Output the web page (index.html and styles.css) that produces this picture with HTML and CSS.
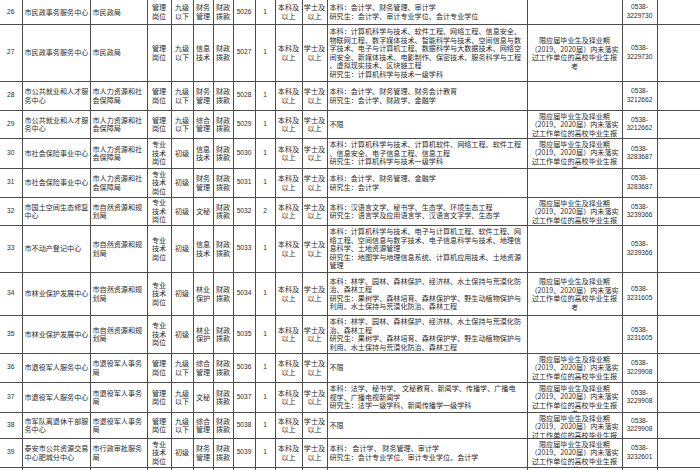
FILE: index.html
```html
<!DOCTYPE html>
<html lang="zh-CN">
<head>
<meta charset="utf-8">
<title>岗位表</title>
<link rel="stylesheet" href="styles.css">
</head>
<body>
<table class="grid">
<colgroup>
<col class="w-no"><col class="w-unit"><col class="w-dept"><col class="w-type"><col class="w-lvl"><col class="w-cat"><col class="w-fund"><col class="w-code"><col class="w-num"><col class="w-edu"><col class="w-deg"><col class="w-major"><col class="w-note"><col class="w-tel"><col class="w-rem">
</colgroup>
<tbody>
<tr class="h24">
<td class="c n">26</td><td>市民政事务服务中心</td><td>市民政局</td><td class="c">管理<br>岗位</td><td class="c">九级<br>以下</td><td class="c">财务<br>管理</td><td class="c">财政<br>拨款</td><td class="c n">5026</td><td class="c n">1</td><td class="c">本科及<br>以上</td><td class="c">学士及<br>以上</td>
<td>本科：会计学、财务管理、审计学<br>研究生：会计学、审计专业学位、会计专业学位</td><td class="c"></td><td class="c n">0538-<br>3229730</td><td></td>
</tr>
<tr class="h57">
<td class="c n">27</td><td>市民政事务服务中心</td><td>市民政局</td><td class="c">管理<br>岗位</td><td class="c">九级<br>以下</td><td class="c">信息<br>技术</td><td class="c">财政<br>拨款</td><td class="c n">5027</td><td class="c n">1</td><td class="c">本科及<br>以上</td><td class="c">学士及<br>以上</td>
<td>本科：计算机科学与技术、软件工程、网络工程、信息安全、<br>物联网工程、数字媒体技术、智能科学与技术、空间信息与数<br>字技术、电子与计算机工程、数据科学与大数据技术、网络空<br>间安全、新媒体技术、电影制作、保密技术、服务科学与工程<br>、虚拟现实技术、区块链工程<br>研究生：计算机科学与技术一级学科</td>
<td class="c"><div class="clip">限应届毕业生及择业期<br>（2019、2020届）内未落实<br>过工作单位的高校毕业生报<br>考</div></td><td class="c n">0538-<br>3229730</td><td></td>
</tr>
<tr class="h29">
<td class="c n">28</td><td>市公共就业和人才服<br>务中心</td><td>市人力资源和社<br>会保障局</td><td class="c">管理<br>岗位</td><td class="c">九级<br>以下</td><td class="c">财务<br>管理</td><td class="c">财政<br>拨款</td><td class="c n">5028</td><td class="c n">1</td><td class="c">本科及<br>以上</td><td class="c">学士及<br>以上</td>
<td>本科：会计学、财务管理、财务会计教育<br>研究生：会计学、财政学、金融学</td><td class="c"></td><td class="c n">0538-<br>3212662</td><td></td>
</tr>
<tr class="h28">
<td class="c n">29</td><td>市公共就业和人才服<br>务中心</td><td>市人力资源和社<br>会保障局</td><td class="c">管理<br>岗位</td><td class="c">九级<br>以下</td><td class="c">综合<br>管理</td><td class="c">财政<br>拨款</td><td class="c n">5029</td><td class="c n">1</td><td class="c">本科及<br>以上</td><td class="c">学士及<br>以上</td>
<td>不限</td>
<td class="c"><div class="clip">限应届毕业生及择业期<br>（2019、2020届）内未落实<br>过工作单位的高校毕业生报<br>考</div></td><td class="c n">0538-<br>3212662</td><td></td>
</tr>
<tr class="h30">
<td class="c n">30</td><td>市社会保险事业中心</td><td>市人力资源和社<br>会保障局</td><td class="c">专业<br>技术<br>岗位</td><td class="c">初级</td><td class="c">信息<br>技术</td><td class="c">财政<br>拨款</td><td class="c n">5030</td><td class="c n">1</td><td class="c">本科及<br>以上</td><td class="c">学士及<br>以上</td>
<td>本科：计算机科学与技术、计算机软件、网络工程、软件工程<br>、信息安全、电子信息工程、信息工程<br>研究生：计算机科学与技术一级学科</td>
<td class="c"><div class="clip">限应届毕业生及择业期<br>（2019、2020届）内未落实<br>过工作单位的高校毕业生报<br>考</div></td><td class="c n">0538-<br>3283687</td><td></td>
</tr>
<tr class="h29">
<td class="c n">31</td><td>市社会保险事业中心</td><td>市人力资源和社<br>会保障局</td><td class="c">专业<br>技术<br>岗位</td><td class="c">初级</td><td class="c">财务<br>管理</td><td class="c">财政<br>拨款</td><td class="c n">5031</td><td class="c n">1</td><td class="c">本科及<br>以上</td><td class="c">学士及<br>以上</td>
<td>本科：会计学、财务管理、金融学<br>研究生：会计学</td><td class="c"></td><td class="c n">0538-<br>3283687</td><td></td>
</tr>
<tr class="h28">
<td class="c n">32</td><td>市国土空间生态修复<br>中心</td><td>市自然资源和规<br>划局</td><td class="c">专业<br>技术<br>岗位</td><td class="c">初级</td><td class="c">文秘</td><td class="c">财政<br>拨款</td><td class="c n">5032</td><td class="c n">2</td><td class="c">本科及<br>以上</td><td class="c">学士及<br>以上</td>
<td>本科：汉语言文学、秘书学、生态学、环境生态工程<br>研究生：语言学及应用语言学、汉语言文字学、生态学</td>
<td class="c"><div class="clip">限应届毕业生及择业期<br>（2019、2020届）内未落实<br>过工作单位的高校毕业生报<br>考</div></td><td class="c n">0538-<br>3239366</td><td></td>
</tr>
<tr class="h47">
<td class="c n">33</td><td>市不动产登记中心</td><td>市自然资源和规<br>划局</td><td class="c">专业<br>技术<br>岗位</td><td class="c">初级</td><td class="c">信息<br>技术</td><td class="c">财政<br>拨款</td><td class="c n">5033</td><td class="c n">1</td><td class="c">本科及<br>以上</td><td class="c">学士及<br>以上</td>
<td>本科：计算机科学与技术、电子与计算机工程、软件工程、网<br>络工程、空间信息与数字技术、电子信息科学与技术、地理信<br>息科学、土地资源管理<br>研究生：地图学与地理信息系统、计算机应用技术、土地资源<br>管理</td><td class="c"></td><td class="c n">0538-<br>3239366</td><td></td>
</tr>
<tr class="h43">
<td class="c n">34</td><td>市林业保护发展中心</td><td>市自然资源和规<br>划局</td><td class="c">专业<br>技术<br>岗位</td><td class="c">初级</td><td class="c">林业<br>保护</td><td class="c">财政<br>拨款</td><td class="c n">5034</td><td class="c n">1</td><td class="c">本科及<br>以上</td><td class="c">学士及<br>以上</td>
<td>本科：林学、园林、森林保护、经济林、水土保持与荒漠化防<br>治、森林工程<br>研究生：果树学、森林培育、森林保护学、野生动植物保护与<br>利用、水土保持与荒漠化防治、森林工程</td>
<td class="c"><div class="clip">限应届毕业生及择业期<br>（2019、2020届）内未落实<br>过工作单位的高校毕业生报<br>考</div></td><td class="c n">0538-<br>3231605</td><td></td>
</tr>
<tr class="h38">
<td class="c n">35</td><td>市林业保护发展中心</td><td>市自然资源和规<br>划局</td><td class="c">专业<br>技术<br>岗位</td><td class="c">初级</td><td class="c">林业<br>保护</td><td class="c">财政<br>拨款</td><td class="c n">5035</td><td class="c n">1</td><td class="c">本科及<br>以上</td><td class="c">学士及<br>以上</td>
<td>本科：林学、园林、森林保护、经济林、水土保持与荒漠化防<br>治、森林工程<br>研究生：果树学、森林培育、森林保护学、野生动植物保护与<br>利用、水土保持与荒漠化防治、森林工程</td><td class="c"></td><td class="c n">0538-<br>3231605</td><td></td>
</tr>
<tr class="h29">
<td class="c n">36</td><td>市退役军人服务中心</td><td>市退役军人事务<br>局</td><td class="c">管理<br>岗位</td><td class="c">九级<br>以下</td><td class="c">综合<br>管理</td><td class="c">财政<br>拨款</td><td class="c n">5036</td><td class="c n">1</td><td class="c">本科及<br>以上</td><td class="c">学士及<br>以上</td>
<td>不限</td>
<td class="c"><div class="clip">限应届毕业生及择业期<br>（2019、2020届）内未落实<br>过工作单位的高校毕业生报<br>考</div></td><td class="c n">0538-<br>3229908</td><td></td>
</tr>
<tr class="h30">
<td class="c n">37</td><td>市退役军人服务中心</td><td>市退役军人事务<br>局</td><td class="c">管理<br>岗位</td><td class="c">九级<br>以下</td><td class="c">文秘</td><td class="c">财政<br>拨款</td><td class="c n">5037</td><td class="c n">1</td><td class="c">本科及<br>以上</td><td class="c">学士及<br>以上</td>
<td>本科：法学、秘书学、 文秘教育、新闻学、传播学、广播电<br>视学、广播电视新闻学<br>研究生：法学一级学科、新闻传播学一级学科</td>
<td class="c"><div class="clip">限应届毕业生及择业期<br>（2019、2020届）内未落实<br>过工作单位的高校毕业生报<br>考</div></td><td class="c n">0538-<br>3229908</td><td></td>
</tr>
<tr class="h26">
<td class="c n">38</td><td>市军队离退休干部服<br>务中心</td><td>市退役军人事务<br>局</td><td class="c">管理<br>岗位</td><td class="c">九级<br>以下</td><td class="c">综合<br>管理</td><td class="c">财政<br>拨款</td><td class="c n">5038</td><td class="c n">1</td><td class="c">本科及<br>以上</td><td class="c">学士及<br>以上</td>
<td>不限</td>
<td class="c"><div class="clip">限应届毕业生及择业期<br>（2019、2020届）内未落实<br>过工作单位的高校毕业生报<br>考</div></td><td class="c n">0538-<br>3229908</td><td></td>
</tr>
<tr class="h29">
<td class="c n">39</td><td>泰安市公共资源交易<br>中心肥城分中心</td><td>市行政审批服务<br>局</td><td class="c">专业<br>技术<br>岗位</td><td class="c">初级</td><td class="c">财务<br>管理</td><td class="c">财政<br>拨款</td><td class="c n">5039</td><td class="c n">1</td><td class="c">本科及<br>以上</td><td class="c">学士及<br>以上</td>
<td>本科： 会计学、 财务管理、审计学<br>研究生：会计专业学位、审计专业学位、会计学</td>
<td class="c"><div class="clip">限应届毕业生及择业期<br>（2019、2020届）内未落实<br>过工作单位的高校毕业生报<br>考</div></td><td class="c n">0538-<br>3232601</td><td></td>
</tr>
<tr class="h20">
<td></td><td></td><td></td><td></td><td></td><td></td><td></td><td></td><td></td><td></td><td></td><td></td><td></td><td></td><td></td>
</tr>
</tbody>
</table>
</body>
</html>
```

FILE: styles.css
```css
html, body {
  margin: 0;
  padding: 0;
  background: #ffffff;
}

body {
  width: 700px;
  height: 470px;
  overflow: hidden;
  font-family: "Noto Sans CJK SC", "Noto Sans", sans-serif;
  font-size: 7.1px;
  line-height: 8.5px;
  color: #2a2a2a;
}

.grid {
  border-collapse: collapse;
  table-layout: fixed;
  width: 700px;
}

.grid td {
  border: 1px solid #4d4d4d;
  padding: 0 2px;
  vertical-align: middle;
  text-align: left;
  white-space: nowrap;
  overflow: hidden;
}

.grid tr:first-child td { border-top: none; }
.grid td:first-child { border-left: none; }

.grid td.c { text-align: center; padding: 0 1px; }
.grid td.n { font-family: "Liberation Sans", "Noto Sans", sans-serif; font-size: 6.6px; }

.w-no { width: 22px; }
.w-unit { width: 68px; }
.w-dept { width: 57px; }
.w-type { width: 24px; }
.w-lvl { width: 22px; }
.w-cat { width: 20px; }
.w-fund { width: 20px; }
.w-code { width: 22px; }
.w-num { width: 20px; }
.w-edu { width: 27px; }
.w-deg { width: 25px; }
.w-major { width: 200px; }
.w-note { width: 95px; }
.w-tel { width: 35px; }
.w-rem { width: 43px; }

.h20 { --h: 20px; height: 20px; }
.h24 { --h: 24px; height: 24px; }
.h26 { --h: 26px; height: 26px; }
.h28 { --h: 28px; height: 28px; }
.h29 { --h: 29px; height: 29px; }
.h30 { --h: 30px; height: 30px; }
.h38 { --h: 38px; height: 38px; }
.h43 { --h: 43px; height: 43px; }
.h47 { --h: 47px; height: 47px; }
.h57 { --h: 57px; height: 57px; }

.clip {
  max-height: calc(var(--h) - 1px);
  overflow: hidden;
  padding-top: 1px;
  box-sizing: border-box;
}
```
